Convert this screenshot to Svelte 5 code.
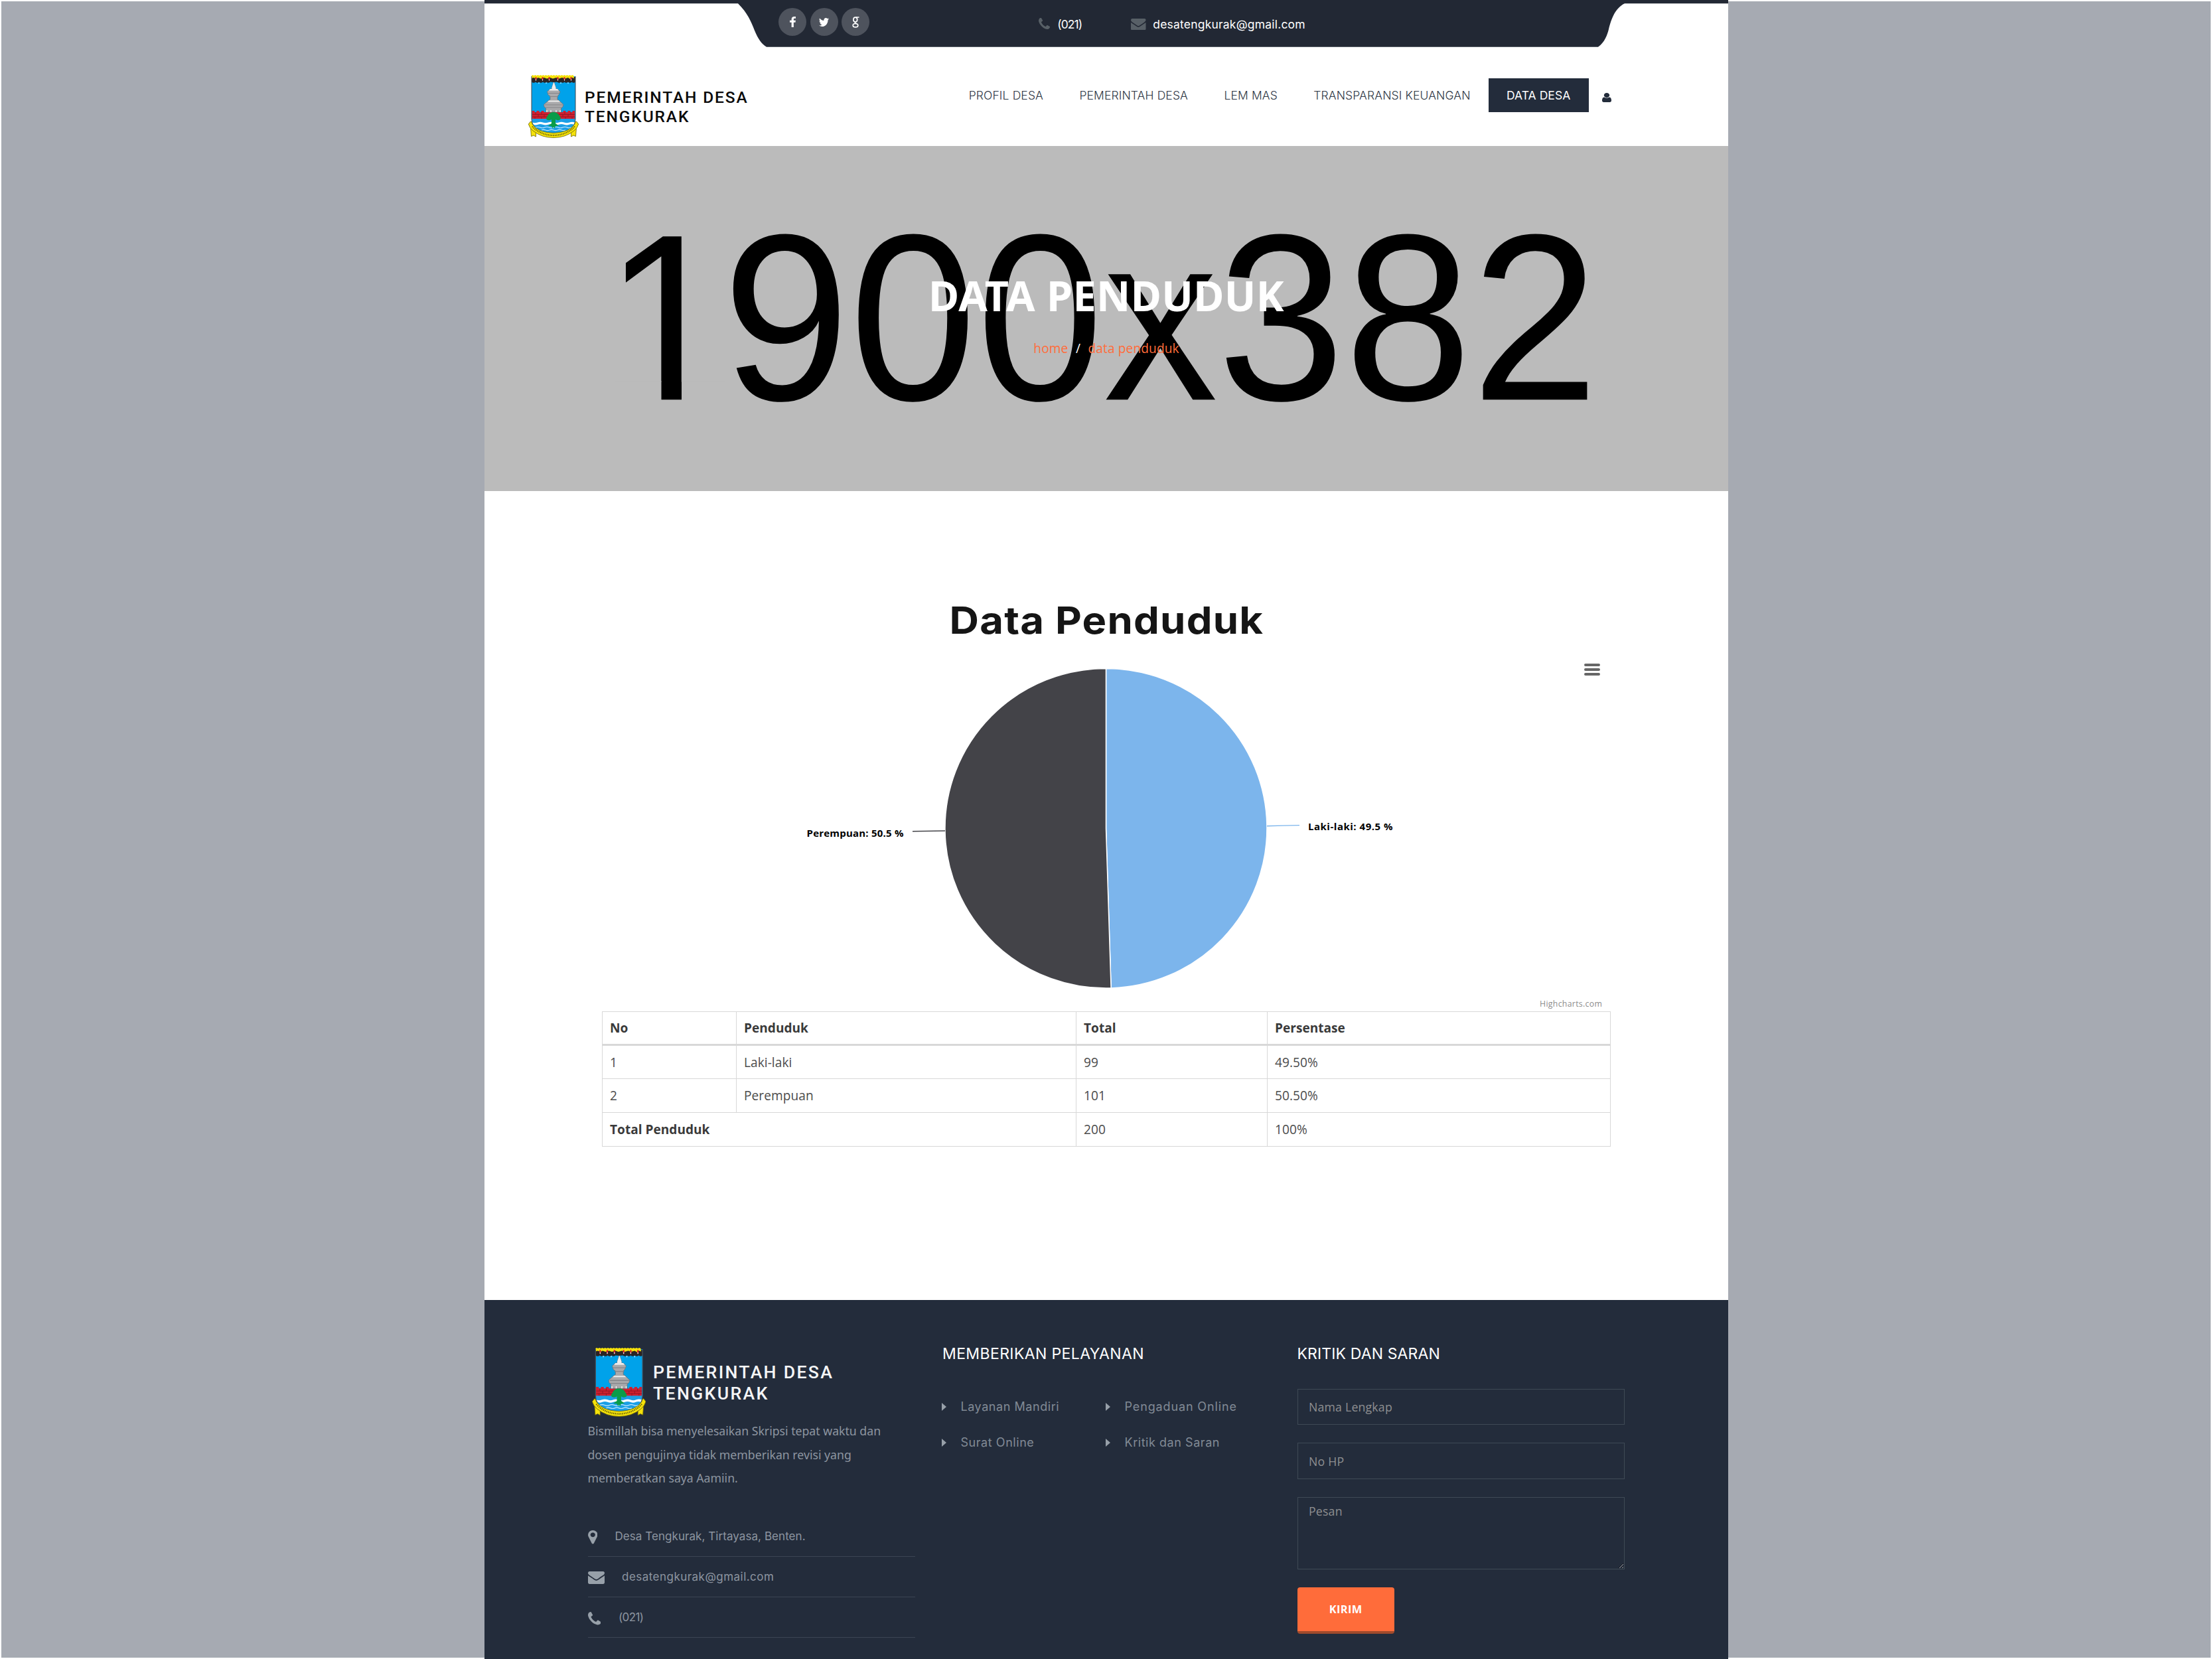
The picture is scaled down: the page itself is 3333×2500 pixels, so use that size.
<script>
  const icons = {
    phone: {
      box: '192 128 1408 1408',
      d: 'M1600 1240q0 27-10 70.5t-21 68.5q-21 50-122 106-94 51-186 51-27 0-53-3.5t-57-12.5-47-14.5-55.5-20.5-49.5-18q-98-35-175-83-127-79-264-216t-216-264q-48-77-83-175-3-9-18-49.5t-20.5-55.5-14.5-47-12.5-57-3.5-53q0-92 51-186 56-101 106-122 25-11 68.5-21t70.5-10q14 0 21 3 18 6 53 76 11 19 30 54t35 63.5 31 53.5q3 4 17.5 25t21.5 35.5 7 28.5q0 20-28.5 50t-62 55-62 53-28.5 46q0 9 5 22.5t8.5 20.5 14 24 11.5 19q76 137 174 235t235 174q2 1 19 11.5t24 14 20.5 8.5 22.5 5q18 0 46-28.5t53-62 55-62 50-28.5q14 0 28.5 7t35.5 21.5 25 17.5q25 15 53.5 31t63.5 35 54 30q70 35 76 53 3 7 3 21z',
    },
    envelope: {
      box: '0 256 1792 1408',
      d: 'M1792 710v794q0 66-47 113t-113 47h-1472q-66 0-113-47t-47-113v-794q44 49 101 87 362 246 497 345 57 42 92.5 65.5t94.5 48 110 24.5h2q51 0 110-24.5t94.5-48 92.5-65.5q170-123 498-345 57-39 100-87zm0-294q0 79-49 151t-122 123q-376 261-468 325-10 7-42.5 31t-54 38.5-52 32.5-57.5 27-50 9h-2q-23 0-50-9t-57.5-27-52-32.5-54-38.5-42.5-31q-91-64-262-182.5t-205-142.5q-62-42-117-115.5t-55-136.5q0-78 41.5-130t118.5-52h1472q65 0 112.5 47t47.5 113z',
    },
    marker: {
      box: '384 128 1024 1536',
      d: 'M1152 640q0-106-75-181t-181-75-181 75-75 181 75 181 181 75 181-75 75-181zm256 0q0 109-33 179l-364 774q-16 33-47.5 52t-67.5 19-67.5-19-46.5-52l-365-774q-33-70-33-179 0-212 150-362t362-150 362 150 150 362z',
    },
    facebook: {
      box: '479 0 864 1664',
      d: 'M1343 12v264h-157q-86 0-116 36t-30 108v189h293l-39 296h-254v759h-306v-759h-255v-296h255v-218q0-186 104-288.5t277-102.5q147 0 228 12z',
    },
    twitter: {
      box: '108 256 1576 1280',
      d: 'M1684 408q-67 98-162 167 1 14 1 42 0 130-38 259.5t-115.5 248.5-184.5 210.5-258 146-323 54.5q-271 0-496-145 35 4 78 4 225 0 401-138-105-2-188-64.5t-114-159.5q33 5 61 5 43 0 85-11-112-23-185.5-111.5t-73.5-205.5v-4q68 38 146 41-66-44-105-115t-39-154q0-88 44-163 121 149 294.5 238.5t371.5 99.5q-8-38-8-74 0-134 94.5-228.5t228.5-94.5q140 0 236 102 109-21 205-78-37 115-142 178 93-10 186-50z',
    },
    user: {
      box: '256 128 1280 1536',
      d: 'M1536 1399q0 109-62.5 187t-150.5 78h-854q-88 0-150.5-78t-62.5-187q0-85 8.5-160.5t31.5-152 58.5-131 94-89 134.5-34.5q131 128 313 128t313-128q76 0 134.5 34.5t94 89 58.5 131 31.5 152 8.5 160.5zm-256-887q0 159-112.5 271.5t-271.5 112.5-271.5-112.5-112.5-271.5 112.5-271.5 271.5-112.5 271.5 112.5 112.5 271.5z',
    },
  };

  const nav = ['PROFIL DESA', 'PEMERINTAH DESA', 'LEM MAS', 'TRANSPARANSI KEUANGAN', 'DATA DESA'];
  const active = 'DATA DESA';

  const rows = [
    { no: 1, name: 'Laki-laki', total: 99, color: '#7cb5ec' },
    { no: 2, name: 'Perempuan', total: 101, color: '#434348' },
  ];
  const sum = rows.reduce((n, r) => n + r.total, 0);
  const pct = (n) => (n / sum) * 100;

  // Pie geometry inside the 1520x554 chart canvas
  const pie = { cx: 759.5, cy: 278.2, rx: 242.5, ry: 240.8 };
  const point = (t) => {
    const a = t * Math.PI * 2;
    return `${(pie.cx + pie.rx * Math.sin(a)).toFixed(2)} ${(pie.cy - pie.ry * Math.cos(a)).toFixed(2)}`;
  };
  let start = 0;
  const slices = rows.map((r) => {
    const end = start + r.total / sum;
    const d = `M${pie.cx} ${pie.cy}L${point(start)}A${pie.rx} ${pie.ry} 0 ${end - start > 0.5 ? 1 : 0} 1 ${point(end)}Z`;
    start = end;
    return { d, color: r.color };
  });

  const links = ['Layanan Mandiri', 'Pengaduan Online', 'Surat Online', 'Kritik dan Saran'];
  const contacts = [
    { icon: 'marker', text: 'Desa Tengkurak, Tirtayasa, Benten.' },
    { icon: 'envelope', text: 'desatengkurak@gmail.com' },
    { icon: 'phone', text: '(021)' },
  ];
</script>

{#snippet icon(name)}
  <svg class="icon {name}" viewBox={icons[name].box} preserveAspectRatio="none"><path d={icons[name].d} /></svg>
{/snippet}

{#snippet emblem()}
  <svg class="emblem" viewBox="0 0 76 95" preserveAspectRatio="none">
    <path d="M5 2H71V66Q71 78 60 85Q50 91 38 91Q26 91 16 85Q5 78 5 66Z" fill="#00a2ea" />
    <!-- sea -->
    <path d="M5.5 66H70.5Q70 78 60 85Q50 91 38 91Q26 91 16 85Q6 78 5.5 66Z" fill="#1b9fe6" />
    <path d="M6 71.500q4 1.600 8 0t8 0 8 0 8 0 8 0 8 0 8 0 8 0l-1 3.200q-4-1.600-7.500 0t-7.500 0-8 0-8 0-8 0-8 0-7.500 0-6.500 0z" fill="#fff" />
    <path d="M11 79q3.400-1.600 6.800 0t6.800 0 6.800 0 6.800 0 6.800 0 6.800 0 6.800 0 6 0M20 83q3-1.200 6 0t6 0 6 0 6 0 6 0 6 0" fill="none" stroke="#c4e8ff" stroke-width="1.100" />
    <!-- brick wall -->
    <path d="M5.500 56v-2h4v2h3v-2h4v2h3v-2h4v2h29v-2h4v2h3v-2h4v2h3v-2h3.500v12H5.500z" fill="#cf2030" />
    <path d="M6 59.500H70M6 63H70M11 56v3.500M20 56v3.500M55 56v3.500M64 56v3.500M15 59.500V63M24 59.500V63M52 59.500V63M60 59.500V63M10 63v3M20 63v3M56 63v3M66 63v3" stroke="#8d1522" stroke-width=".8" fill="none" />
    <!-- minaret -->
    <path d="M38.500 10L41.500 19V21H44L48 25 46 30 44 32V37L46 38 53 44.500 52 48 49.500 50V56H26.500V50L24 48 23.500 44.500 31 38 33 37V32L30 30 28.500 25 33 21H35.500V19Z" fill="#a9a9ab" stroke="#6f6f73" stroke-width=".7" />
    <path d="M38.500 10L41.500 19V21H44L46 23.500H31L33 21H35.500V19ZM31 38.500 46 38.500 48 40.500H29Z" fill="#ececec" />
    <path d="M29 27.500H47.500M32 32.500H45M25 45H52.500M25.500 49H50.500" stroke="#858589" stroke-width="1.200" />
    <path d="M28 56v-3M34 56v-3M42 56v-3M48 56v-3" stroke="#fff" stroke-width="1.200" />
    <!-- tree -->
    <path d="M38 56c5 0 8 3 9.500 6.500 2.500 2 1.500 5.500-1.500 5.500-2 .5-3.500 0-5-1v6l5 3.500-5 .5-1.500 3.500-1.500-2.500-1.500 2.500-1.500-3.500-5-.5 5-3.500v-6c-1.500 1-3 1.500-5 1-3 0-4-3.500-1.500-5.500C30 59 33 56 38 56z" fill="#0a9c49" />
    <!-- top band -->
    <path d="M5 3H71V10.500Q68.500 13 65.500 10.500 63 13 60 10.500 57 13 54.500 10.500 52 13 49 10.500 46.500 13 43.500 10.500L38.500 11 33 10.500Q30 13 27.500 10.500 25 13 22 10.500 19 13 16 10.500 13.500 13 11 10.500 8 13 5 10.500Z" fill="#2b2424" />
    <path d="M5 1l1.500-1 2 1 2-1 2 1 2-1 2 1 2-1 2 1 2-1 2 1 2-1 2 1 2-1 2 1 2-1 2 1 2-1 2 1 2-1 2 1 2-1 2 1 2-1 2 1 2-1 2 1 2-1 2 1 2-1 2 1 2-1 2 1 .5 4-3-1-3 2-3-2-5 1.500-4-1.500-5 1.500-4-1.500-5 1.500-4-1.500-5 1.500-4-1.500-5 1.500-4-1.500-3 1.500-4-1.500-3 1z" fill="#f5e20a" />
    <path d="M11.500 3v4.500M21.500 3v4.500M31.500 3v4.500M44.500 3v4.500M54.500 3v4.500M64.500 3v4.500" stroke="#e0252b" stroke-width="1.900" />
    <path d="M11.500 6.500v2M21.500 6.500v2M31.500 6.500v2M44.500 6.500v2M54.500 6.500v2M64.500 6.500v2M16 11.500v1.500M27 11.500v1.500M49 11.500v1.500M60 11.500v1.500" stroke="#fff" stroke-width="1.100" />
    <path d="M5 2V66Q5 78 16 85Q26 91 38 91Q50 91 60 85Q71 78 71 66V2" fill="none" stroke="#45525c" stroke-width="1.100" />
    <!-- ribbon -->
    <path d="M3.500 79L4.500 92.500 8 91 11.500 93V82ZM72.500 79L71.500 92.500 68 91 64.500 93V82Z" fill="#f5e20a" stroke="#6f6708" stroke-width=".8" />
    <path d="M3.500 70Q5.500 70 6 74Q14 86.500 38 87.500Q62 86.500 70 74Q70.500 70 72.500 70L75.700 74Q74 80 69 84Q56 94.500 38 94.500Q20 94.500 7 84Q2 80 .3 74Z" fill="#f5e20a" stroke="#6f6708" stroke-width=".8" />
    <path d="M6 77.500Q18 90.500 38 91Q58 90.500 70 77.500" fill="none" stroke="#6b640a" stroke-width="2.400" stroke-dasharray="1.300 1.200" />
  </svg>
{/snippet}

<div class="page">
  <aside class="side left"></aside>

  <div class="site">
    <header>
      <svg class="ribbon" viewBox="0 0 1874 71">
        <path d="M0 0H1874V5.300H1718C1704 12 1698 28 1694 44C1692 52 1688 64 1678 70.700H425C417 66 412 58 407 46C402 33 396 19 382 5.300H0Z" />
      </svg>
      <div class="topbar">
        <div class="social">
          <span>{@render icon('facebook')}</span>
          <span>{@render icon('twitter')}</span>
          <span>
            <svg class="google" viewBox="0 0 11 17">
              <g fill="none" stroke="#fff" stroke-width="1.700">
                <ellipse cx="4.800" cy="4.600" rx="2.900" ry="3.500" />
                <ellipse cx="5" cy="13.200" rx="3.800" ry="2.700" />
                <path d="M5.500 1H10.500M4.500 8Q3.500 9.500 6.500 10.600" />
              </g>
            </svg>
          </span>
        </div>
        <div class="reach phone-no">{@render icon('phone')}<span>(021)</span></div>
        <div class="reach mail">{@render icon('envelope')}<span>desatengkurak@gmail.com</span></div>
      </div>

      <div class="menu">
        <div class="brand">
          {@render emblem()}
          <div class="name">PEMERINTAH DESA<br />TENGKURAK</div>
        </div>
        <nav>
          {#each nav as item}
            <a class:active={item === active}>{item}</a>
          {/each}
          {@render icon('user')}
        </nav>
      </div>
    </header>

    <section class="banner">
      <svg class="placeholder" viewBox="0 0 1874 520">
        <g transform="translate(167.500 382.300) scale(1 1.040)">
          <text x="12.400 191.300" y="0">1900x382</text>
          <!-- trims the foot of the numeral one down to a plain stem -->
          <path d="M30 -27H99V2H30ZM129.500 -27H195V2H129.500Z" fill="#bbb" />
        </g>
      </svg>
      <h1>DATA PENDUDUK</h1>
      <div class="crumbs"><a>home</a><span>/</span><a>data penduduk</a></div>
    </section>

    <main>
      <h2><span>Data Penduduk</span></h2>
      <svg class="chart" viewBox="0 0 1520 554">
        {#each slices as s}
          <path d={s.d} fill={s.color} stroke="#fff" stroke-width="1.500" stroke-linejoin="round" />
        {/each}
        <path d="M1002 274.800Q1026 274 1051 273.600" class="lead blue" />
        <path d="M517 282Q493 282.400 468 282.700" class="lead dark" />
        <text class="label" x="1064" y="281" letter-spacing=".51">Laki-laki: 49.5 %</text>
        <text class="label" x="308.500" y="290.500" letter-spacing=".21">Perempuan: 50.5 %</text>
        <path d="M1482 32H1502M1482 39H1502M1482 46H1502" class="bars" />
        <text class="credit" x="1413" y="547">Highcharts.com</text>
      </svg>

      <table>
        <colgroup><col class="c1" /><col class="c2" /><col class="c3" /><col /></colgroup>
        <thead>
          <tr><th>No</th><th>Penduduk</th><th>Total</th><th>Persentase</th></tr>
        </thead>
        <tbody>
          {#each rows as r}
            <tr><td>{r.no}</td><td>{r.name}</td><td>{r.total}</td><td>{pct(r.total).toFixed(2)}%</td></tr>
          {/each}
          <tr><th colspan="2">Total Penduduk</th><td>{sum}</td><td>100%</td></tr>
        </tbody>
      </table>
    </main>

    <footer>
      <div class="about">
        <div class="brand">
          {@render emblem()}
          <div class="name">PEMERINTAH DESA<br />TENGKURAK</div>
        </div>
        <p>Bismillah bisa menyelesaikan Skripsi tepat waktu dan<br />dosen pengujinya tidak memberikan revisi yang<br />memberatkan saya Aamiin.</p>
        <ul>
          {#each contacts as c}
            <li class="row-{c.icon}">{@render icon(c.icon)}<span>{c.text}</span></li>
          {/each}
        </ul>
      </div>

      <div class="services">
        <h3>MEMBERIKAN PELAYANAN</h3>
        <div class="links">
          {#each links as l}
            <a><i></i>{l}</a>
          {/each}
        </div>
      </div>

      <form class="feedback">
        <h3>KRITIK DAN SARAN</h3>
        <input type="text" placeholder="Nama Lengkap" />
        <input type="text" placeholder="No HP" />
        <textarea placeholder="Pesan"></textarea>
        <button type="button">KIRIM</button>
      </form>
    </footer>
  </div>

  <aside class="side right"></aside>
</div>

<style>
  :global(body) { background: #fff; overflow: hidden; }
  .page {
    display: grid;
    grid-template-columns: 730px 1874px 729px;
    height: 2500px;
    font-family: 'Open Sans', sans-serif;
  }
  .side { background: #a6aab2; border: solid #fff; }
  .left { border-width: 2px 0 2px 2px; }
  .right { border-width: 2px 2px 2px 0; }
  .site { display: flex; flex-direction: column; background: #fff; height: 2500px; overflow: hidden; }
  .icon, .emblem { display: block; fill: currentColor; flex: none; }

  /* header */
  header { position: relative; height: 220px; font-family: Inter, sans-serif; }
  .ribbon { position: absolute; left: 0; top: 0; width: 1874px; height: 71px; fill: #222834; }
  .topbar { position: relative; display: flex; height: 71px; padding-left: 443px; color: #fff; }
  .social { display: flex; gap: 5.6px; padding-top: 12px; }
  .social span {
    display: flex; align-items: center; justify-content: center;
    width: 42px; height: 42px; border-radius: 50%; background: #4e535d;
  }
  .facebook { width: 9px; height: 16px; }
  .twitter { width: 15px; height: 13px; }
  .google { width: 11px; height: 17px; }
  .reach { display: flex; align-items: center; height: 71px; font-size: 17.5px; line-height: 68px; }
  .reach span { padding-top: 3px; }
  .reach .icon { color: #586067; }
  .phone-no { margin-left: 255px; letter-spacing: -0.9px; gap: 11px; }
  .phone-no .icon { width: 17px; height: 17px; }
  .mail { margin-left: 74px; letter-spacing: 0.2px; gap: 10.500px; }
  .mail .icon { width: 22.5px; height: 17.5px; position: relative; top: 1px; }

  .menu { display: flex; justify-content: space-between; padding: 42px 176px 0 66px; }
  .brand { display: flex; }
  .brand .emblem { width: 76px; height: 95px; }
  .name {
    margin: 20px 0 0 9px;
    font: 500 24.5px/28.6px Roboto, sans-serif; letter-spacing: 1.87px; color: #0b0b0b; white-space: nowrap;
  }
  nav { display: flex; height: 51px; margin-top: 5px; color: #2c3543; }
  nav a { padding: 0 27.2px; font-size: 17.5px; font-weight: 300; line-height: 51px; letter-spacing: 0.13px; white-space: nowrap; }
  nav a.active { background: #232c3b; color: #fff; font-weight: 400; letter-spacing: 0.05px; }
  nav .user { width: 14px; height: 14px; margin: 22px 0 0 20.5px; color: #232c3b; }

  /* banner */
  .banner {
    position: relative; height: 520px; background: #bbb;
    display: flex; flex-direction: column; align-items: center;
  }
  .placeholder { position: absolute; inset: 0; width: 1874px; height: 520px; }
  .placeholder text { font: 344px 'Liberation Sans', sans-serif; fill: #000; }
  h1 {
    position: relative; margin: 194.5px 0 35px;
    font: 700 63px/60px 'Noto Sans', sans-serif; letter-spacing: 0.41px; color: #fff;
  }
  .crumbs { position: relative; display: flex; gap: 11.5px; font-size: 19.1px; line-height: 30px; letter-spacing: 0.12px; color: #ff6c3a; }
  .crumbs span { color: #fff; }

  /* content */
  main { height: 1219px; padding: 159.5px 177px 0; box-sizing: border-box; }
  h2 { display: flex; justify-content: center; margin: 0; height: 70px; }
  h2 span {
    font: 700 56px/70px Inter, sans-serif; letter-spacing: 1.1px; color: #151515;
    transform: scaleX(1.1); white-space: nowrap;
  }
  .chart { display: block; width: 1520px; height: 554px; }
  .lead { fill: none; stroke-width: 1.4; }
  .blue { stroke: #7cb5ec; }
  .dark { stroke: #434348; }
  .label { font: 700 15px 'Open Sans', sans-serif; fill: #000; }
  .bars { stroke: #666; stroke-width: 4; stroke-linecap: round; }
  .credit { font: 12.3px 'Open Sans', sans-serif; letter-spacing: 0.31px; fill: #8c8c8c; }

  table { width: 1520px; table-layout: fixed; border-collapse: collapse; font-size: 19.1px; color: #4c4c4c; }
  .c1 { width: 202px; }
  .c2 { width: 512px; }
  .c3 { width: 288px; }
  th, td {
    height: 51px; padding: 1px 11px 0; box-sizing: border-box; border: 1px solid #d8d8d8;
    line-height: 48px; text-align: left; font-weight: 400; letter-spacing: 0.06px;
  }
  th { font-weight: 700; color: #3a3a3a; letter-spacing: 0; }
  thead th { height: 50px; padding-top: 0; border-bottom-width: 3px; }

  /* footer */
  footer {
    flex: 1; display: grid; grid-template-columns: 493px 493px 493px; column-gap: 41.500px; align-content: start;
    padding: 65.5px 0 0 155.5px; background: #232c3b; color: #8d95a0;
  }
  .about .brand { padding: 6.500px 0 0 6px; }
  .about .emblem { width: 81.5px; height: 104px; }
  .about .name { margin: 20.5px 0 0 11px; font-size: 26.7px; line-height: 32.4px; letter-spacing: 2.27px; color: #f4f5f6; }
  p { margin: 4px 0 0; font: 17.7px/35.5px 'Noto Sans', sans-serif; letter-spacing: -0.01px; white-space: nowrap; }
  ul { list-style: none; margin: 39px 0 0; padding: 0; }
  li {
    display: flex; align-items: center; height: 60.2px; border-bottom: 1px solid #3b4553;
    font: 17px/60px Inter, sans-serif;
  }
  li .icon { color: #97a0a9; position: relative; top: 2px; }
  li .marker { width: 14.5px; height: 20.5px; }
  li .envelope { width: 25px; height: 19px; }
  li .phone { width: 19.5px; height: 19.5px; }
  .row-marker span { margin-left: 26.5px; letter-spacing: 0.06px; }
  .row-envelope span { margin-left: 26.5px; letter-spacing: 0.47px; }
  .row-phone span { margin-left: 27px; letter-spacing: -0.63px; }

  h3 { margin: 0 0 38.3px; font: 400 23px/30px Inter, sans-serif; letter-spacing: 0.38px; color: #fff; }
  .links { display: grid; grid-template-columns: 247px 246px; }
  .links a { display: flex; align-items: center; height: 54.4px; font: 18px/54.4px Inter, sans-serif; letter-spacing: 0.55px; color: #818a95; white-space: nowrap; }
  .links a:nth-child(2) { letter-spacing: 0.87px; }
  .links i { width: 0; height: 0; margin: 0 21.5px 0 -1px; border: solid transparent; border-width: 6px 0 6px 7.5px; border-left-color: #97a0a9; }

  .feedback { display: flex; flex-direction: column; align-items: flex-start; }
  .feedback h3 { letter-spacing: 0.12px; }
  input, textarea {
    display: block; width: 493px; height: 54.300px; box-sizing: border-box; margin: 0 0 27.4px; padding: 0 16.5px;
    background: transparent; border: 1px solid #3f4a55; border-radius: 0; outline: 0;
    font: 17.7px/52px 'Open Sans', sans-serif; letter-spacing: 0.2px; color: #fff;
  }
  textarea { height: 109px; padding-top: 5px; line-height: 30px; margin-bottom: 27px; }
  input::placeholder, textarea::placeholder { color: #8e8f91; }
  button {
    width: 146.500px; height: 69.5px; padding: 0; border: 0; border-bottom: 4px solid #a04a2c; border-radius: 4px;
    background: #ff6c3a; color: #fff; font: 700 16.4px/65px 'Open Sans', sans-serif; letter-spacing: 0.36px;
  }
</style>
